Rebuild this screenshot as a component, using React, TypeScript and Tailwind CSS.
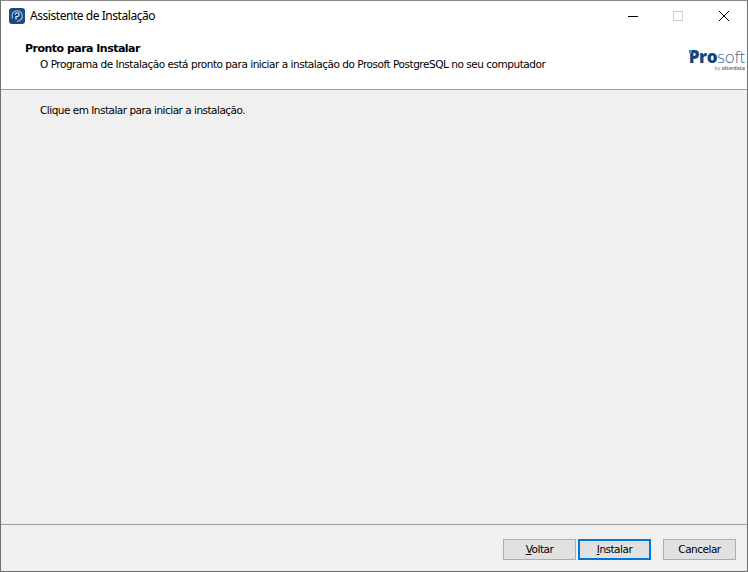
const font = "font-['DejaVu_Sans',sans-serif]";

function Logo() {
  return (
    <div className="flex flex-col items-end w-[58px] mr-[2px]">
      <div className="flex items-baseline leading-[14px] relative h-[14px]">
        <span className="font-['Open_Sans',sans-serif] font-extrabold text-[17px] text-[#17457a] tracking-[-0.4px]">Pro</span>
        <span className="font-['Open_Sans',sans-serif] font-light text-[17px] text-[#4a6f93] tracking-[-0.2px]">soft</span>
        <span className="absolute left-0 top-0 w-[3px] h-[3px] bg-[#2c9fd6]" />
      </div>
      <span className="font-['Open_Sans',sans-serif] text-[5px] leading-[5px] text-[#777777] mt-[2px]">by <b>alterdata</b></span>
    </div>
  );
}

function AppIcon() {
  return (
    <svg width="16" height="16" viewBox="0 0 16 16" className="shrink-0">
      <rect x="0" y="0" width="16" height="16" rx="3" fill="#1c4b7f" />
      <path d="M3.6 10.5A5.2 5.2 0 1 1 8 13.2" fill="none" stroke="#a9c3dc" strokeWidth="1.1" />
      <path d="M7 11.5V8M7 8.5h1.6a1.9 1.9 0 1 0-2.3-1.9" fill="none" stroke="#e8f0f7" strokeWidth="1.2" />
    </svg>
  );
}

function Btn({ children, focus }: { children: React.ReactNode; focus?: boolean }) {
  return (
    <div
      className={
        "w-[73px] h-[21px] box-border bg-[#e1e1e1] flex items-center justify-center text-[10.5px] text-black pt-[1px] " +
        (focus ? "border-2 border-[#0078d7]" : "border border-[#adadad]")
      }
    >
      <span className="tracking-[-0.5px]">{children}</span>
    </div>
  );
}

export default function App() {
  return (
    <div className={`w-[748px] h-[572px] box-border border border-[#6f6f6f] border-t-[#8a8a8a] bg-[#f0f0f0] flex flex-col overflow-hidden ${font}`}>
      <div className="h-[29px] bg-white flex items-center shrink-0">
        <div className="ml-[8px] flex items-center">
          <AppIcon />
          <span className="ml-[5px] font-['Noto_Sans',sans-serif] text-[12px] text-black tracking-[-0.45px]">Assistente de Instalação</span>
        </div>
        <div className="ml-auto flex items-center">
          <svg width="12" height="12" viewBox="0 0 12 12" className="mr-[33px]">
            <path d="M1 6.5h10" stroke="#000" strokeWidth="1" />
          </svg>
          <svg width="12" height="12" viewBox="0 0 12 12" className="mr-[34px]">
            <rect x="1.5" y="1.5" width="9" height="9" fill="none" stroke="#cccccc" />
          </svg>
          <svg width="12" height="12" viewBox="0 0 12 12" className="mr-[17px]">
            <path d="M1 1l10 10M11 1L1 11" stroke="#000" strokeWidth="1" />
          </svg>
        </div>
      </div>
      <div className="h-[59px] bg-white border-b border-[#a0a0a0] flex shrink-0 box-content">
        <div className="flex-1 pl-[24px] pt-[12px]">
          <div className="text-[11px] leading-[14px] font-bold text-black tracking-[-0.52px]">Pronto para Instalar</div>
          <div className="pl-[15px] mt-[1px] text-[10.5px] leading-[14px] text-black tracking-[-0.47px] whitespace-nowrap">
            O Programa de Instalação está pronto para iniciar a instalação do Prosoft PostgreSQL no seu computador
          </div>
        </div>
        <div className="pt-[20px]">
          <Logo />
        </div>
      </div>
      <div className="flex-1 pl-[39px] pt-[13px]">
        <div className="text-[10.5px] leading-[14px] text-black tracking-[-0.51px]">Clique em Instalar para iniciar a instalação.</div>
      </div>
      <div className="h-[32px] border-t border-[#a0a0a0] shrink-0 box-content flex items-start pt-[14px] pr-[11px] justify-end">
        <Btn><span className="underline">V</span>oltar</Btn>
        <div className="ml-[2px]">
          <Btn focus><span className="underline">I</span>nstalar</Btn>
        </div>
        <div className="ml-[12px]">
          <Btn>Cancelar</Btn>
        </div>
      </div>
    </div>
  );
}
